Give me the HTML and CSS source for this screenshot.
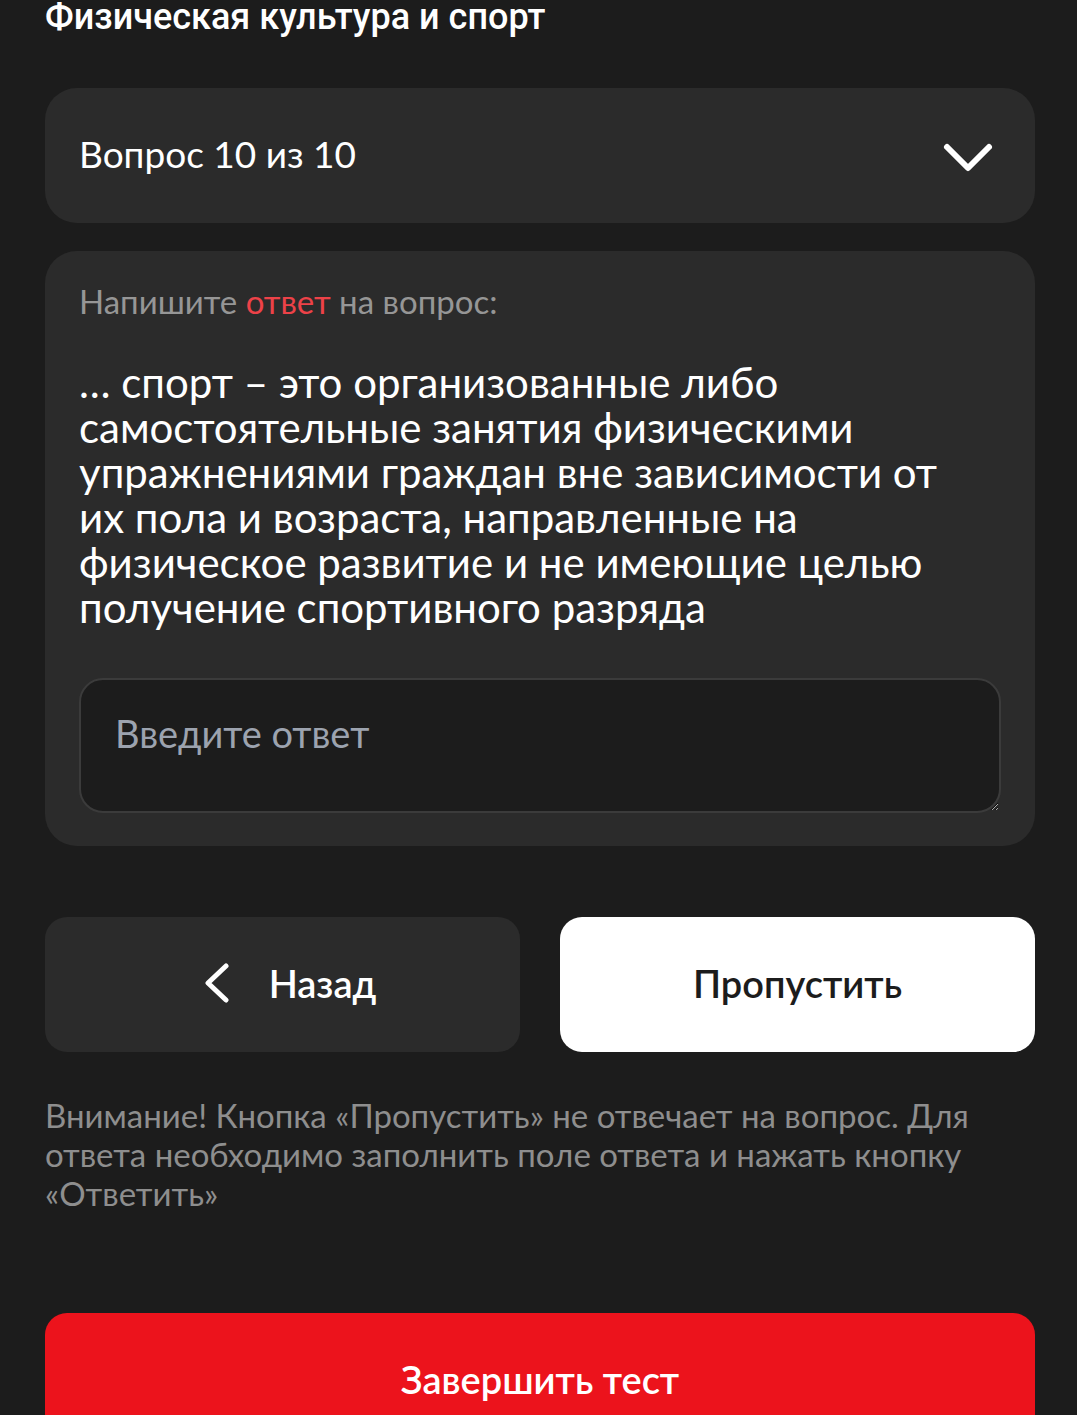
FILE: index.html
```html
<!DOCTYPE html>
<html lang="ru">
<head>
    <meta charset="UTF-8">
    <meta name="viewport" content="width=device-width, initial-scale=1.0">
    <title>Физическая культура и спорт</title>
    <link rel="stylesheet" href="styles.css">
</head>
<body>
<main class="test">
    <h1 class="test-title">Физическая культура и спорт</h1>

    <button type="button" class="question-select">
        <span>Вопрос 10 из 10</span>
        <svg class="icon-down" viewBox="0 0 48 32" aria-hidden="true">
            <path d="M3 9L24 30L45 9"/>
        </svg>
    </button>

    <form id="answerForm">
        <section class="question">
            <p class="question-hint">Напишите <span class="accent">ответ</span> на вопрос:</p>
            <label class="question-text" for="answer">… спорт – это организованные либо<br>
                самостоятельные занятия физическими<br>
                упражнениями граждан вне зависимости от<br>
                их пола и возраста, направленные на<br>
                физическое развитие и не имеющие целью<br>
                получение спортивного разряда</label>
            <textarea id="answer" name="answer" placeholder="Введите ответ"></textarea>
        </section>

        <div class="actions">
            <button type="button" class="btn btn-back">
                <svg class="icon-back" viewBox="0 0 24 40" aria-hidden="true">
                    <path d="M21 3L3 20L21 37"/>
                </svg>
                Назад
            </button>
            <button type="button" class="btn btn-skip">Пропустить</button>
        </div>

        <p class="notice">Внимание! Кнопка «Пропустить» не отвечает на вопрос. Для<br>
            ответа необходимо заполнить поле ответа и нажать кнопку<br>
            «Ответить»</p>

        <button type="submit" class="btn btn-finish">Завершить тест</button>
    </form>
</main>
</body>
</html>
```

FILE: styles.css
```css
* {
    box-sizing: border-box;
}
html {
    scrollbar-width: none;
}
body {
    margin: 0;
    background: #1c1c1c;
    color: #fff;
    font-family: Lato, "Open Sans", sans-serif;
}
button, textarea {
    font-family: inherit;
    color: inherit;
    border: none;
}
button {
    cursor: pointer;
}
.test {
    padding: 0 42px 0 45px;
}
.test-title {
    margin: 0 0 54px;
    font: 500 36px/34px Roboto, sans-serif;
}
.question-select {
    display: flex;
    justify-content: space-between;
    align-items: center;
    width: 100%;
    height: 135px;
    padding: 0 43px 4px 34px;
    border-radius: 32px;
    background: #2b2b2b;
    font-size: 37px;
}
svg {
    fill: none;
    stroke: #fff;
    stroke-width: 5;
    stroke-linecap: round;
    stroke-linejoin: round;
}
.icon-down {
    width: 48px;
    height: 32px;
    stroke-width: 6;
    overflow: visible;
}
.question {
    margin-top: 28px;
    padding: 31px 34px 33px;
    border-radius: 32px;
    background: #2b2b2b;
}
.question-hint {
    margin: 0 0 40px;
    color: #969696;
    font-size: 33px;
    line-height: 38px;
}
.accent {
    color: #ed4248;
}
.question-text {
    display: block;
    margin-bottom: 48px;
    font-size: 42px;
    line-height: 45px;
}
textarea {
    display: block;
    width: 100%;
    height: 135px;
    padding: 32px 34px;
    border: 2px solid #3b3b3b;
    border-radius: 24px;
    background: #1c1c1c;
    font-size: 38px;
    line-height: 42px;
}
textarea::placeholder {
    color: #9ca3af;
}
.actions {
    display: grid;
    grid-template-columns: 1fr 1fr;
    gap: 40px;
    margin-top: 71px;
}
.btn {
    display: flex;
    justify-content: center;
    align-items: center;
    height: 135px;
    padding: 0 20px 4px;
    border-radius: 22px;
    font-size: 38px;
    font-weight: 600;
}
.btn-back {
    gap: 40px;
    padding-left: 36px;
    background: #2b2b2b;
}
.icon-back {
    width: 24px;
    height: 40px;
}
.btn-skip {
    background: #fff;
    color: #1c1c1c;
}
.notice {
    margin: 44px 0 100px;
    color: #8e8e8e;
    font-size: 33px;
    line-height: 39px;
}
.btn-finish {
    width: 100%;
    background: #ec131c;
}
```
